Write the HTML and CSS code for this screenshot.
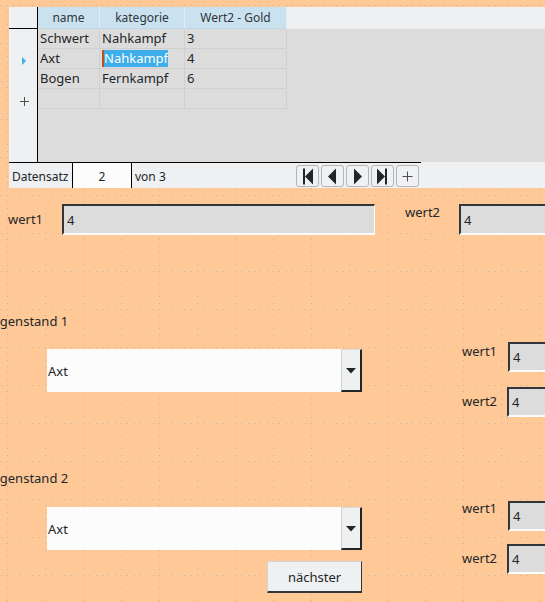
FILE: index.html
```html
<!DOCTYPE html>
<html lang="de">
<head>
<meta charset="utf-8">
<title>Formular</title>
<link rel="stylesheet" href="styles.css">
</head>
<body>
<div class="page">
  <div class="dbgrid">
    <div class="grid-body">
      <div class="rowheads">
        <div class="corner"></div>
        <div class="rh"></div>
        <div class="rh rh-current">
          <svg class="cur-tri" width="4" height="8" viewBox="0 0 4 8"><polygon points="0,0 4,4 0,8" fill="#3daee9"/></svg>
        </div>
        <div class="rh"></div>
        <div class="rh rh-new">
          <svg width="9" height="9" viewBox="0 0 9 9"><path d="M4.5 0V9M0 4.5H9" stroke="#4d4d4d" stroke-width="1"/></svg>
        </div>
      </div>
      <div class="table">
        <div class="thead">
          <div class="th c1">name</div>
          <div class="th c2">kategorie</div>
          <div class="th c3">Wert2 - Gold</div>
        </div>
        <div class="tr">
          <div class="td c1">Schwert</div>
          <div class="td c2">Nahkampf</div>
          <div class="td c3">3</div>
        </div>
        <div class="tr">
          <div class="td c1">Axt</div>
          <div class="td c2"><span class="sel">Nahkampf</span></div>
          <div class="td c3">4</div>
        </div>
        <div class="tr">
          <div class="td c1">Bogen</div>
          <div class="td c2">Fernkampf</div>
          <div class="td c3">6</div>
        </div>
        <div class="tr">
          <div class="td c1"></div>
          <div class="td c2"></div>
          <div class="td c3"></div>
        </div>
      </div>
    </div>
    <div class="navbar">
      <div class="nav-main">
        <div class="nav-label">Datensatz</div>
        <div class="nav-input">2</div>
        <div class="nav-of">von 3</div>
        <div class="nav-buttons">
          <div class="nbtn"><svg width="23" height="22" viewBox="0 0 23 22"><rect x="7" y="3.5" width="2" height="16" fill="#232629"/><polygon points="9,11.5 17,3.5 17,19.5" fill="#232629"/></svg></div>
          <div class="nbtn"><svg width="23" height="22" viewBox="0 0 23 22"><polygon points="7,11.5 15,3.5 15,19.5" fill="#232629"/></svg></div>
          <div class="nbtn"><svg width="23" height="22" viewBox="0 0 23 22"><polygon points="8,3.5 16,11.5 8,19.5" fill="#232629"/></svg></div>
          <div class="nbtn"><svg width="23" height="22" viewBox="0 0 23 22"><polygon points="6,3.5 14,11.5 6,19.5" fill="#232629"/><rect x="14" y="3.5" width="2" height="16" fill="#232629"/></svg></div>
          <div class="nbtn"><svg width="23" height="22" viewBox="0 0 23 22"><path d="M11.5 6.5V16.5M6.5 11.5H16.5" stroke="#4d4d4d" stroke-width="1"/></svg></div>
        </div>
      </div>
      <div class="nav-rest"></div>
    </div>
  </div>

  <div class="fields-top">
    <div class="lbl lbl-w1">wert1</div>
    <div class="tbox tbox-main">4</div>
    <div class="lbl lbl-w2">wert2</div>
    <div class="tbox tbox-side">4</div>
  </div>

  <div class="group group-1">
    <div class="group-left">
      <div class="group-title">Gegenstand 1</div>
      <div class="combo">
        <div class="combo-text">Axt</div>
        <div class="combo-btn"><svg width="10" height="6" viewBox="0 0 10 6"><polygon points="0,0 10,0 5,5.5" fill="#232629"/></svg></div>
      </div>
    </div>
    <div class="group-right">
      <div class="wrow">
        <div class="lbl wl-a">wert1</div>
        <div class="tbox tbox-small">4</div>
      </div>
      <div class="wrow wrow-2">
        <div class="lbl wl-b">wert2</div>
        <div class="tbox tbox-small">4</div>
      </div>
    </div>
  </div>

  <div class="group group-2">
    <div class="group-left">
      <div class="group-title">Gegenstand 2</div>
      <div class="combo combo-2">
        <div class="combo-text">Axt</div>
        <div class="combo-btn"><svg width="10" height="6" viewBox="0 0 10 6"><polygon points="0,0 10,0 5,5.5" fill="#232629"/></svg></div>
      </div>
      <div class="push-btn">nächster</div>
    </div>
    <div class="group-right">
      <div class="wrow">
        <div class="lbl wl-a">wert1</div>
        <div class="tbox tbox-small tbox-low">4</div>
      </div>
      <div class="wrow wrow-3">
        <div class="lbl wl-b">wert2</div>
        <div class="tbox tbox-small">4</div>
      </div>
    </div>
  </div>
</div>
</body>
</html>
```

FILE: styles.css
```css
html, body {
  margin: 0;
  padding: 0;
}

body {
  --dot: conic-gradient(from 270deg at 1px 1px, #bcb6b0 90deg, transparent 90deg);
  font-family: "Noto Sans", "DejaVu Sans", sans-serif;
  font-size: 13px;
  line-height: 18px;
  color: #232629;
  background-color: #ffc997;
  background-image: var(--dot), var(--dot), var(--dot), var(--dot), var(--dot), var(--dot),
                    var(--dot), var(--dot), var(--dot), var(--dot), var(--dot);
  background-size: 38px 38px;
  background-position: 7px 5px, 7px 11px, 7px 18px, 7px 24px, 7px 30px, 7px 37px,
                       13px 5px, 20px 5px, 26px 5px, 32px 5px, 1px 5px;
  overflow: hidden;
}

.page {
  width: 545px;
  height: 602px;
  overflow: hidden;
}

/* ---------- data grid ---------- */
.dbgrid {
  margin: 7px 0 0 9px;
  width: 536px;
  height: 181px;
  display: flex;
  flex-direction: column;
}

.grid-body {
  height: 155px;
  display: flex;
}

.rowheads {
  width: 29px;
  box-sizing: border-box;
  background: #eff0f1;
  border-right: 1px solid #000;
  flex: none;
}

.corner {
  height: 22px;
  box-sizing: border-box;
  border-bottom: 1px solid #000;
}

.rh {
  height: 20px;
  display: flex;
  align-items: center;
  justify-content: center;
}

.rh-current {
  padding-top: 3px;
  box-sizing: border-box;
  padding-left: 2px;
}

.rh-new {
  padding-top: 4px;
  box-sizing: border-box;
  padding-left: 2px;
}

.table {
  flex: 1;
  background: #dcdcdc;
}

.thead {
  display: flex;
  height: 22px;
  background: #eff0f1;
}

.th {
  box-sizing: border-box;
  height: 22px;
  background: #cae2f0;
  border-right: 1px solid #e2edf4;
  border-bottom: 1px solid #c3d7e3;
  text-align: center;
  font-size: 12px;
  line-height: 22px;
  color: #31363b;
}

.tr {
  display: flex;
  height: 20px;
}

.td {
  box-sizing: border-box;
  height: 20px;
  border-right: 1px solid #d0d0d0;
  border-bottom: 1px solid #d0d0d0;
  padding-left: 2px;
  line-height: 19px;
  white-space: nowrap;
  overflow: hidden;
}

.c1 { width: 62px; }
.c2 { width: 85px; }
.c3 { width: 102px; }

.sel {
  background: #3daee9;
  color: #fcfcfc;
  border-left: 2px solid #c0501c;
  display: inline-block;
  line-height: 17px;
  vertical-align: top;
  margin-top: 1px;
}

/* ---------- navigation bar ---------- */
.navbar {
  display: flex;
  height: 26px;
  background: #eff0f1;
  font-size: 12px;
}

.nav-main {
  width: 412px;
  display: flex;
  border-top: 1px solid #000;
  height: 26px;
  box-sizing: border-box;
}

.nav-rest {
  flex: 1;
}

.nav-label {
  width: 64px;
  box-sizing: border-box;
  border-right: 1px solid #000;
  padding-left: 3px;
  line-height: 27px;
}

.nav-input {
  width: 59px;
  box-sizing: border-box;
  background: #fcfcfc;
  border-right: 1px solid #000;
  text-align: center;
  line-height: 27px;
}

.nav-of {
  padding-left: 3px;
  line-height: 27px;
}

.nav-buttons {
  margin-left: auto;
  margin-right: 2px;
  margin-top: 2px;
  display: flex;
  gap: 2px;
}

.nbtn {
  width: 23px;
  height: 22px;
  box-sizing: border-box;
  border: 1px solid #b4b6b8;
  border-radius: 3px;
  background: #f0f1f2;
  display: flex;
  align-items: center;
  justify-content: center;
}

.nbtn svg {
  display: block;
  margin: -1px;
}

/* ---------- fields ---------- */
.lbl {
  white-space: nowrap;
  flex: none;
}

.tbox {
  box-sizing: border-box;
  background: #dcdcdc;
  border-style: solid;
  border-color: #31363b #fcfcfc #fcfcfc #31363b;
  border-width: 2px 1px 2px 2px;
  padding-left: 3px;
  display: flex;
  align-items: center;
  flex: none;
}

.fields-top {
  display: flex;
  align-items: flex-start;
  margin-top: 16px;
}

.lbl-w1 {
  margin-left: 8px;
  width: 54px;
  margin-top: 6px;
}

.lbl-w2 {
  margin-left: 30px;
  width: 54px;
  margin-top: -1px;
}

.tbox-main {
  width: 313px;
  height: 31px;
}

.tbox-side {
  width: 100px;
  height: 31px;
}

/* ---------- groups ---------- */
.group {
  display: flex;
  align-items: flex-start;
}

.group-1 { margin-top: 77px; }
.group-2 { margin-top: 52px; }

.group-left {
  width: 362px;
  flex: none;
}

.group-title {
  margin-left: -17px;
  white-space: nowrap;
}

.combo {
  margin-top: 19px;
  margin-left: 47px;
  width: 315px;
  height: 43px;
  display: flex;
  background: #fcfcfc;
}

.combo-2 {
  margin-top: 20px;
}

.combo-text {
  flex: 1;
  padding-left: 1px;
  display: flex;
  align-items: center;
}

.combo-btn {
  width: 21px;
  box-sizing: border-box;
  background: #eff0f1;
  border-left: 1px solid #cfd0d1;
  border-top: 1px solid #dadbdc;
  border-right: 2px solid #232629;
  border-bottom: 2px solid #232629;
  display: flex;
  align-items: center;
  justify-content: center;
  padding-top: 1px;
}

.combo-btn svg {
  display: block;
}

.push-btn {
  margin-top: 11px;
  margin-left: 267px;
  width: 95px;
  height: 32px;
  box-sizing: border-box;
  background: #eff0f1;
  border-style: solid;
  border-color: #d2d3d4 #31363b #31363b #d2d3d4;
  border-width: 1px 1px 2px 1px;
  display: flex;
  align-items: center;
  justify-content: center;
}

.group-right {
  margin-left: 100px;
  margin-top: 30px;
}

.wrow {
  display: flex;
  align-items: flex-start;
}

.wrow-2 { margin-top: 15px; }
.wrow-3 { margin-top: 13px; }

.wl-a { width: 46px; }
.wl-b { width: 45px; margin-top: 5px; }

.tbox-small {
  width: 60px;
  height: 30px;
}

.tbox-low {
  margin-top: 2px;
}
```
